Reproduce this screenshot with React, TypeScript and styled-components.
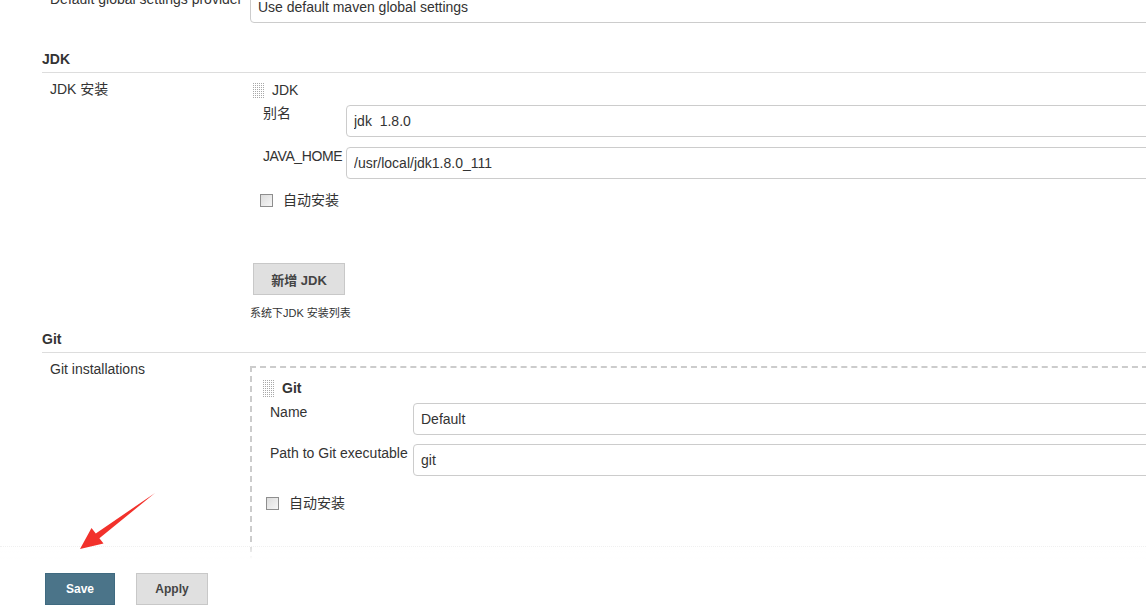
import React from "react";
import styled, { createGlobalStyle } from "styled-components";

const Global = createGlobalStyle`
  html, body { margin: 0; padding: 0; background: #fff; overflow: hidden; }
  body {
    font-family: "Liberation Sans", Arial, "Noto Sans CJK SC", sans-serif;
    font-size: 14px;
    color: #333;
  }
`;

const Page = styled.div`
  position: relative;
  width: 1146px;
  height: 614px;
  overflow: hidden;
`;

const Form = styled.div`
  margin-top: -9px;
  padding-left: 42px;
`;

const Row = styled.div<{ $pt?: number }>`
  display: flex;
  align-items: flex-start;
  padding-top: ${(p) => p.$pt ?? 0}px;
`;

const RowLabel = styled.div<{ $pt?: number }>`
  width: 208px;
  flex: none;
  box-sizing: border-box;
  padding-left: 8px;
  padding-top: ${(p) => p.$pt ?? 0}px;
  line-height: 17px;
  white-space: nowrap;
  overflow: hidden;
`;

const Setting = styled.div`
  flex: 1;
  min-width: 0;
  margin-right: -12px;
`;

const TextInput = styled.input`
  display: block;
  width: 100%;
  box-sizing: border-box;
  height: 32px;
  border: 1px solid #ccc;
  border-radius: 4px;
  padding: 0 7px;
  font-family: "Liberation Sans", Arial, sans-serif;
  font-size: 14px;
  color: #333;
  background: #fff;
  outline: none;
  white-space: pre;
`;

const SectionHeader = styled.div<{ $mt: number }>`
  margin-top: ${(p) => p.$mt}px;
  font-weight: bold;
  font-size: 14px;
  line-height: 18px;
  padding-bottom: 4px;
  border-bottom: 1px solid #ddd;
`;

const ChunkHeader = styled.div<{ $bold?: boolean; $ml: number; $mt: number }>`
  display: flex;
  align-items: center;
  gap: 8px;
  margin-left: ${(p) => p.$ml}px;
  margin-top: ${(p) => p.$mt}px;
  line-height: 17px;
  font-weight: ${(p) => (p.$bold ? "bold" : "normal")};
`;

const Handle = styled.span<{ $h: number }>`
  display: inline-block;
  width: 11px;
  height: ${(p) => p.$h}px;
  background-color: #a8a8a8;
  background-image: linear-gradient(90deg, transparent 1px, #fff 1px),
    linear-gradient(transparent 1px, #fff 1px);
  background-size: 2px 2px;
`;

const Field = styled.div<{ $mt: number; $ml: number }>`
  display: flex;
  align-items: flex-start;
  margin-top: ${(p) => p.$mt}px;
  margin-left: ${(p) => p.$ml}px;
`;

const FieldLabel = styled.div<{ $w: number; $pt: number; $tight?: boolean }>`
  width: ${(p) => p.$w}px;
  flex: none;
  line-height: 17px;
  padding-top: ${(p) => p.$pt}px;
  white-space: nowrap;
  letter-spacing: ${(p) => (p.$tight ? "-0.4px" : "normal")};
`;

const FieldInput = styled.div`
  flex: 1;
  min-width: 0;
`;

const CheckRow = styled.label<{ $mt: number; $ml: number }>`
  display: flex;
  align-items: center;
  gap: 10px;
  margin-top: ${(p) => p.$mt}px;
  margin-left: ${(p) => p.$ml}px;
  line-height: 17px;
`;

const Check = styled.input`
  appearance: none;
  margin: 0;
  width: 13px;
  height: 13px;
  box-sizing: border-box;
  border: 1px solid #8e8e8e;
  background: linear-gradient(135deg, #dcdcdc, #f6f6f6);
`;

const GreyButton = styled.button<{ $w: number }>`
  width: ${(p) => p.$w}px;
  height: 32px;
  box-sizing: border-box;
  border: 1px solid #c8c8c8;
  background: #e0e0e0;
  color: #444;
  font-family: "Liberation Sans", Arial, "Noto Sans CJK SC", sans-serif;
  font-weight: bold;
  font-size: 12px;
  padding: 0;
`;

const AddButton = styled(GreyButton)`
  display: block;
  margin-top: 54px;
  margin-left: 3px;
  font-size: 13px;
`;

const Help = styled.div`
  margin-top: 11px;
  font-size: 11px;
  line-height: 14px;
  color: #333;
`;

const DashedBox = styled.div`
  margin-top: 6px;
  border: 2px dashed #ccc;
  border-right: none;
  padding: 12px 0 0 11px;
  height: 220px;
`;

const BottomBar = styled.div`
  position: absolute;
  left: 0;
  right: 0;
  top: 546px;
  bottom: 0;
  background: linear-gradient(rgba(255, 255, 255, 0.3), #fff 12px);
  border-top: 1px dotted #f0f0f0;
  display: flex;
  gap: 21px;
  padding: 26px 0 0 45px;
  box-sizing: border-box;
`;

const SaveButton = styled.button`
  width: 70px;
  height: 32px;
  box-sizing: border-box;
  border: 1px solid #3f6a80;
  background: #4b7489;
  color: #fff;
  font-family: "Liberation Sans", Arial, sans-serif;
  font-weight: bold;
  font-size: 12px;
  padding: 0;
`;

const ArrowSvg = styled.svg`
  position: absolute;
  left: 0;
  top: 0;
  pointer-events: none;
`;

export default function App() {
  return (
    <Page>
      <Global />
      <Form>
        <Row>
          <RowLabel $pt={0}>Default global settings provider</RowLabel>
          <Setting>
            <TextInput readOnly value="Use default maven global settings" />
          </Setting>
        </Row>

        <SectionHeader $mt={27}>JDK</SectionHeader>
        <Row $pt={7}>
          <RowLabel $pt={1}>JDK 安装</RowLabel>
          <Setting>
            <ChunkHeader $ml={3} $mt={2}>
              <Handle $h={15} />
              <span>JDK</span>
            </ChunkHeader>
            <Field $mt={6} $ml={13}>
              <FieldLabel $w={83} $pt={0}>别名</FieldLabel>
              <FieldInput>
                <TextInput readOnly value="jdk  1.8.0" />
              </FieldInput>
            </Field>
            <Field $mt={10} $ml={13}>
              <FieldLabel $w={83} $pt={1} $tight>JAVA_HOME</FieldLabel>
              <FieldInput>
                <TextInput readOnly value="/usr/local/jdk1.8.0_111" />
              </FieldInput>
            </Field>
            <CheckRow $mt={13} $ml={10}>
              <Check type="checkbox" readOnly />
              <span>自动安装</span>
            </CheckRow>
            <AddButton $w={92}>新增 JDK</AddButton>
            <Help>系统下JDK 安装列表</Help>
          </Setting>
        </Row>

        <SectionHeader $mt={10}>Git</SectionHeader>
        <Row $pt={7}>
          <RowLabel $pt={1}>Git installations</RowLabel>
          <Setting>
            <DashedBox>
              <ChunkHeader $bold $ml={0} $mt={0}>
                <Handle $h={17} />
                <span>Git</span>
              </ChunkHeader>
              <Field $mt={6} $ml={7}>
                <FieldLabel $w={143} $pt={1}>Name</FieldLabel>
                <FieldInput>
                  <TextInput readOnly value="Default" />
                </FieldInput>
              </Field>
              <Field $mt={9} $ml={7}>
                <FieldLabel $w={143} $pt={1}>Path to Git executable</FieldLabel>
                <FieldInput>
                  <TextInput readOnly value="git" />
                </FieldInput>
              </Field>
              <CheckRow $mt={19} $ml={3}>
                <Check type="checkbox" readOnly />
                <span>自动安装</span>
              </CheckRow>
            </DashedBox>
          </Setting>
        </Row>
      </Form>

      <BottomBar>
        <SaveButton>Save</SaveButton>
        <GreyButton $w={72}>Apply</GreyButton>
      </BottomBar>

      <ArrowSvg width="1146" height="614" viewBox="0 0 1146 614">
        <polygon
          points="155,493 99.4,538.2 103.5,543.5 80,549 91.5,528 95.8,533.4"
          fill="#f2312b"
        />
      </ArrowSvg>
    </Page>
  );
}
